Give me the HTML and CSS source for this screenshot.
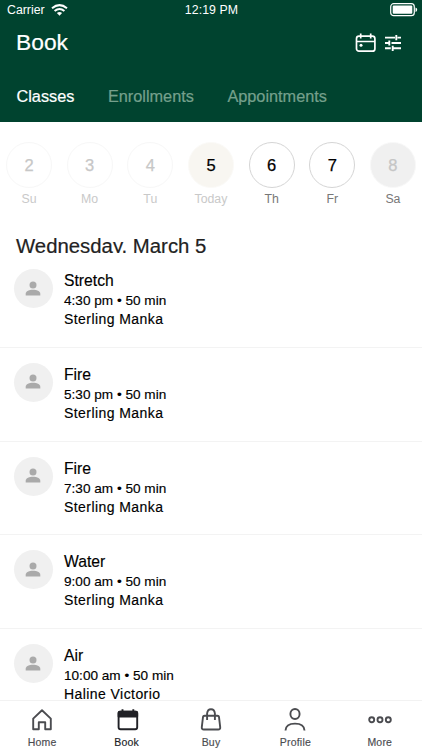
FILE: index.html
```html
<!DOCTYPE html>
<html lang="en">
<head>
<meta charset="utf-8">
<title>Book</title>
<link rel="stylesheet" href="styles.css">
</head>
<body>
<svg width="0" height="0" class="defs"><symbol id="person" viewBox="0 0 16 16"><circle cx="8" cy="4" r="3.500"/><path d="M.7 14.500v-1.800C.7 10 4.500 8.800 8 8.800s7.300 1.200 7.300 3.900v1.800z"/></symbol></svg>
<div class="app">
  <header class="header">
    <div class="status">
      <div class="carrier"><span>Carrier</span>
        <svg width="17" height="12" viewBox="0 0 17 12" fill="none" stroke="#fff" stroke-width="2"><path d="M1 4.200Q8.500-2 16 4.200M3.600 7Q8.500 3 13.400 7"/><path d="M5.900 9Q8.500 7 11.100 9L8.500 11.700z" fill="#fff" stroke="none"/></svg>
      </div>
      <span class="time">12:19 PM</span>
      <svg class="battery" width="28" height="14" viewBox="0 0 28 14"><rect x=".7" y=".7" width="23.600" height="12" rx="3" fill="none" stroke="#fff" stroke-width="1.200"/><rect x="2.700" y="2.600" width="19.600" height="8.200" rx="1" fill="#fff"/><path d="M25.500 4.500q1.700.5 1.700 2.200t-1.700 2.200z" fill="#fff"/></svg>
    </div>
    <div class="title">
      <h1>Book</h1>
      <div class="actions">
        <svg width="22" height="20" viewBox="0 0 22 20" fill="none" stroke="#fff" stroke-width="1.700"><rect x="1.500" y="3.200" width="18.400" height="15" rx="2.500"/><path d="M1.500 8.500h18.400M5.700.5v5M15.700.5v5"/><circle cx="6" cy="12.200" r="1.500" fill="#fff" stroke="none"/></svg>
        <svg width="18" height="18" viewBox="0 0 18 18" fill="none" stroke="#fff" stroke-width="1.900"><path d="M1 3.600h10M13.500 3.600H17M12.300 1v5.200M1 9h4M7.500 9H17M5.300 6.400v5.200M1 14.300h5.800M9 14.300h8M8.700 11.700v5.200"/></svg>
      </div>
    </div>
    <nav class="tabs"><a class="on">Classes</a><a>Enrollments</a><a>Appointments</a></nav>
  </header>
  <section class="days">
    <div class="day past"><b>2</b><span>Su</span></div>
    <div class="day past"><b>3</b><span>Mo</span></div>
    <div class="day past"><b>4</b><span>Tu</span></div>
    <div class="day today"><b>5</b><span>Today</span></div>
    <div class="day"><b>6</b><span>Th</span></div>
    <div class="day"><b>7</b><span>Fr</span></div>
    <div class="day closed"><b>8</b><span>Sa</span></div>
  </section>
  <h2>Wednesday, March 5</h2>
  <main class="list">
    <article><div class="avatar"><svg width="16" height="16"><use href="#person"/></svg></div><div class="info"><h3>Stretch</h3><p>4:30 pm • 50 min</p><p class="staff">Sterling Manka</p></div></article>
    <article><div class="avatar"><svg width="16" height="16"><use href="#person"/></svg></div><div class="info"><h3>Fire</h3><p>5:30 pm • 50 min</p><p class="staff">Sterling Manka</p></div></article>
    <article><div class="avatar"><svg width="16" height="16"><use href="#person"/></svg></div><div class="info"><h3>Fire</h3><p>7:30 am • 50 min</p><p class="staff">Sterling Manka</p></div></article>
    <article><div class="avatar"><svg width="16" height="16"><use href="#person"/></svg></div><div class="info"><h3>Water</h3><p>9:00 am • 50 min</p><p class="staff">Sterling Manka</p></div></article>
    <article><div class="avatar"><svg width="16" height="16"><use href="#person"/></svg></div><div class="info"><h3>Air</h3><p>10:00 am • 50 min</p><p class="staff">Haline Victorio</p></div></article>
  </main>
  <nav class="bottom">
    <a><svg viewBox="0 0 24 24"><path d="M3.200 10.600 12 2.300l8.800 8.300v10.600h-5.600v-7H8.800v7H3.200z"/></svg><span>Home</span></a>
    <a class="on"><svg viewBox="0 0 24 24"><rect x="3.600" y="3.600" width="18.600" height="17.600" rx="2"/><path d="M4.600 3.600h16.600q1 0 1 1v4H3.600v-4q0-1 1-1z" fill="currentColor"/><path d="M7.500 1.200v4M18.300 1.200v4"/></svg><span>Book</span></a>
    <a><svg viewBox="0 0 24 24"><path d="M5.500 7.700h13q1.300 0 1.500 1.300l1.200 10.200q.3 2.300-2 2.300H4.800q-2.300 0-2-2.300L4 9q.2-1.300 1.500-1.300zM8.100 12V5.500Q8.500 1.200 12 1.200t3.900 4.300V12"/></svg><span>Buy</span></a>
    <a><svg viewBox="0 0 24 24"><ellipse cx="12" cy="6" rx="4.600" ry="5"/><path d="M2.500 22.500Q2.800 15.600 12 15.600t9.500 6.900"/></svg><span>Profile</span></a>
    <a><svg viewBox="0 0 24 24"><circle cx="3.700" cy="11.800" r="2.500"/><circle cx="12" cy="11.800" r="2.500"/><circle cx="20.300" cy="11.800" r="2.500"/></svg><span>More</span></a>
  </nav>
</div>
</body>
</html>
```
FILE: styles.css
```css
* { box-sizing: border-box; margin: 0; padding: 0; }
body { font-family: "Liberation Sans", Arial, sans-serif; background: #fff; color: #000; }
.defs { position: absolute; }
.app { width: 422px; height: 750px; display: flex; flex-direction: column; overflow: hidden; }
.header { height: 122px; flex: none; background: #00432f; color: #fff; }
.status { height: 20px; display: grid; grid-template-columns: 1fr auto 1fr; align-items: center; padding: 0 4px 0 7px; font-size: 12.300px; line-height: 19px; }
.carrier { display: flex; align-items: center; gap: 6px; }
.time { margin-left: -2px; letter-spacing: .1px; }
.battery { justify-self: end; }
.title { display: flex; justify-content: space-between; align-items: center; height: 46px; padding: 0 20px 0 16px; }
h1 { font-size: 22.800px; font-weight: 400; line-height: 44px; margin-top: -2px; -webkit-text-stroke: .2px; }
.actions { display: flex; align-items: center; gap: 7px; }
.tabs { display: flex; gap: 33.500px; padding: 19.500px 16.500px 0; font-size: 16.300px; line-height: 20px; color: #75a08c; }
.tabs a { -webkit-text-stroke: .2px; }
.tabs .on { color: #fff; }
.days { flex: none; display: grid; grid-template-columns: repeat(7, 46px); justify-content: space-between; padding: 19.500px 6px 0; height: 113px; }
.day { display: flex; flex-direction: column; align-items: center; }
.day b { width: 46px; height: 46px; border: 1px solid #d5d5d5; border-radius: 50%; font-size: 16.500px; font-weight: 400; line-height: 44px; text-align: center; -webkit-text-stroke: .25px; }
.day span { font-size: 12.300px; line-height: 16px; margin-top: 3px; color: #777; }
.past b { border-color: #f7f7f7; color: #c7c7c7; }
.past span, .today span { color: #c9c9c9; }
.today b { background: #f8f6f1; border-color: #fbfaf7; }
.closed b { background: #f0f0f0; border-color: #f8f8f8; color: #c5c5c5; }
h2 { flex: none; height: 18px; margin-bottom: 1px; padding-left: 16px; font-size: 20.350px; line-height: 23px; font-weight: 400; color: #222; -webkit-text-stroke: .2px; overflow: hidden; }
.list { flex: 1; min-height: 0; overflow: hidden; }
article { height: 93.750px; display: flex; padding: 15px 13.500px 0; gap: 11.500px; border-bottom: 1px solid #f3f3f3; }
.avatar { width: 39px; height: 39px; border-radius: 50%; background: #f0f0f0; display: grid; place-items: center; fill: #aaa; }
.info { padding-top: 1px; }
h3 { font-size: 15.700px; line-height: 22px; font-weight: 400; -webkit-text-stroke: .15px; }
p { font-size: 13.600px; line-height: 18px; -webkit-text-stroke: .15px; }
.staff { font-size: 14px; line-height: 19px; letter-spacing: .43px; }
.bottom { height: 50px; flex: none; border-top: 1px solid #f2f2f2; display: grid; grid-template-columns: repeat(5, 1fr); color: #4b4c50; background: #fff; }
.bottom a { display: flex; flex-direction: column; align-items: center; padding-top: 7px; font-size: 10.500px; line-height: 14px; letter-spacing: .2px; -webkit-text-stroke: .15px; }
.bottom svg { width: 24px; height: 24px; fill: none; stroke: currentColor; stroke-width: 1.900; stroke-linejoin: round; margin-bottom: 3px; }
.bottom .on { color: #202126; }
```
